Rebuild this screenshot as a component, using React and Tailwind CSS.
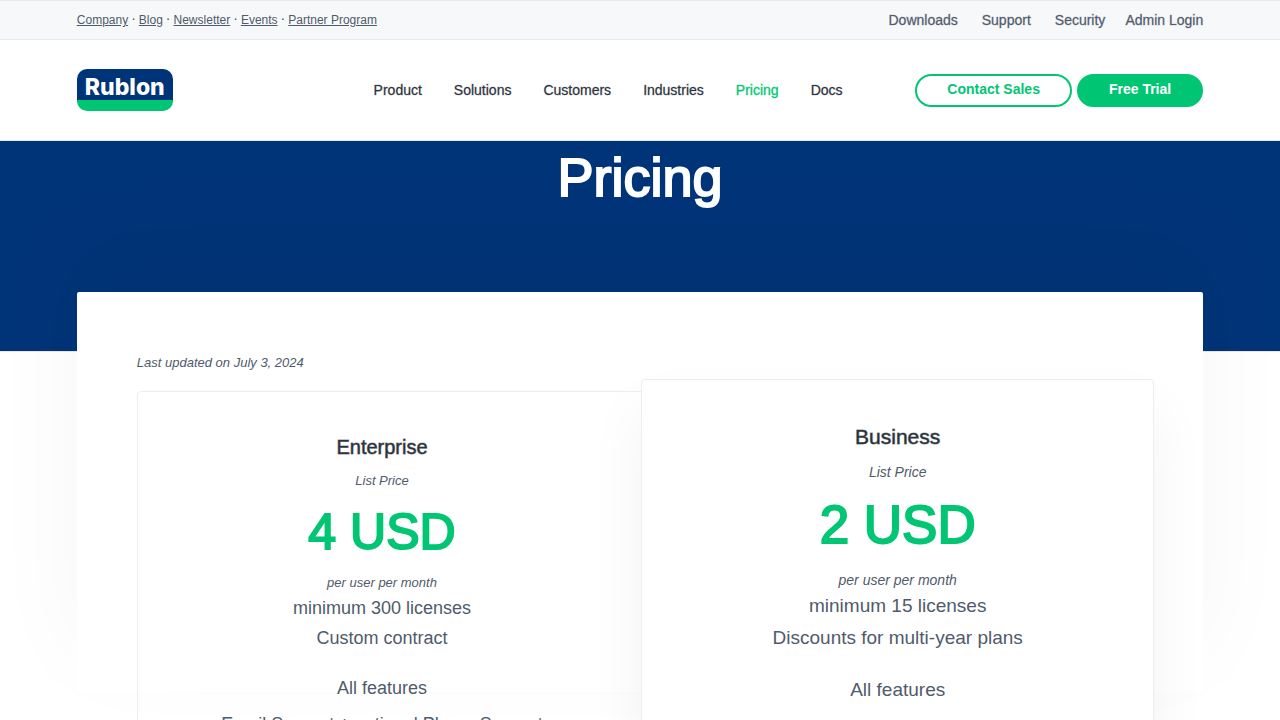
const companyLinks = ['Company', 'Blog', 'Newsletter', 'Events', 'Partner Program'];

const menu = ['Product', 'Solutions', 'Customers', 'Industries', 'Pricing', 'Docs'];

function Logo() {
  return (
    <a
      href="#home"
      className="flex h-[42px] w-24 justify-center overflow-hidden rounded-[10px] border-b-[11px] border-[#00c673] bg-[#003478] font-[Inter] text-[23px] leading-9 font-extrabold text-white"
    >
      Rublon
    </a>
  );
}

function TopBar() {
  return (
    <div className="border-y border-[#e6e8ea] bg-[#f7f8fa] px-[6%] text-[#4f5b6b]">
      <div className="flex h-[38px] items-center justify-between">
        <p className="flex gap-[3px] text-xs">
          {companyLinks.map((label, i) => (
            <span key={label} className="flex gap-[3px]">
              {i > 0 && <span className="text-sm leading-3">·</span>}
              <a href="#company" className="underline">{label}</a>
            </span>
          ))}
        </p>
        <nav className="flex text-sm [-webkit-text-stroke:1px_#4f5b6b44]">
          <a href="#downloads" className="mr-6">Downloads</a>
          <a href="#support" className="mr-6">Support</a>
          <a href="#security" className="mr-5">Security</a>
          <a href="#login">Admin Login</a>
        </nav>
      </div>
    </div>
  );
}

function Header() {
  return (
    <header className="flex h-[101px] items-center justify-between border-b border-[#e6e8ea] px-[6%]">
      <Logo />
      <nav className="ml-32 flex gap-8 text-sm text-[#2b323c]">
        {menu.map((label) => (
          <a
            key={label}
            href="#menu"
            className={
              label === 'Pricing'
                ? 'text-[#00c673] [-webkit-text-stroke:1px_#00c67355]'
                : '[-webkit-text-stroke:1px_#2b323c44]'
            }
          >
            {label}
          </a>
        ))}
      </nav>
      <div className="flex gap-[5px] text-sm font-bold">
        <a href="#sales" className="rounded-full border-2 border-[#00c673] px-[30px] pt-[3px] pb-[6px] text-[#00c673]">
          Contact Sales
        </a>
        <a href="#trial" className="rounded-full border-2 border-[#00c673] bg-[#00c673] px-[30px] pt-[3px] pb-[6px] text-white">
          Free Trial
        </a>
      </div>
    </header>
  );
}

function EnterpriseCard() {
  return (
    <section className="mt-3 -mr-1 h-[420px] flex-1 rounded border border-[#ecedef] pt-10 pr-[18px] text-center">
      <h2 className="text-xl leading-[30px] text-[#2b323c] [-webkit-text-stroke:1px_#2b323c88]">Enterprise</h2>
      <p className="mt-[9px] text-[13px] leading-5 italic">List Price</p>
      <p className="mt-[11px] text-[50px] leading-[60px] text-[#00c673] [-webkit-text-stroke:2px_#00c673]">4 USD</p>
      <p className="mt-[11px] text-[13px] leading-5 italic">per user per month</p>
      <div className="text-lg leading-[30px]">
        <p>minimum 300 licenses</p>
        <p>Custom contract</p>
        <p className="mt-5">All features</p>
        <p className="mt-[6px]">Email Support + optional Phone Support</p>
      </div>
    </section>
  );
}

function BusinessCard() {
  return (
    <section className="z-10 -mr-[11px] h-[460px] w-[513px] shrink-0 rounded border border-[#ecedef] bg-white pt-[41px] text-center shadow-[0_30px_60px_rgba(0,0,0,0.05)]">
      <h2 className="text-[21px] leading-[31px] text-[#2b323c] [-webkit-text-stroke:1px_#2b323c88]">Business</h2>
      <p className="mt-[10px] text-sm leading-5 italic">List Price</p>
      <p className="mt-3 text-[53px] leading-[62px] text-[#00c673] [-webkit-text-stroke:2px_#00c673]">2 USD</p>
      <p className="mt-[14px] text-sm leading-5 italic">per user per month</p>
      <div className="text-[19px] leading-8">
        <p>minimum 15 licenses</p>
        <p>Discounts for multi-year plans</p>
        <p className="mt-5">All features</p>
      </div>
    </section>
  );
}

export default function App() {
  return (
    <div className="h-screen overflow-hidden bg-white font-['Liberation_Sans',sans-serif] text-[#4f5b6b]">
      <TopBar />
      <Header />
      <div className="h-[211px] border-b border-[#e6e8ea] bg-[#003478]">
        <h1 className="pt-[6px] text-center text-[54px] leading-[60px] text-white [-webkit-text-stroke:2px_white]">
          Pricing
        </h1>
      </div>
      <main className="relative mx-[6%] -mt-[60px] h-[400px] rounded-xs bg-white px-[60px] pt-[60px] shadow-[0_-40px_100px_rgba(0,0,0,0.04)]">
        <p className="text-[13px] leading-[22px] italic">Last updated on July 3, 2024</p>
        <div className="mt-[5px] flex items-start">
          <EnterpriseCard />
          <BusinessCard />
        </div>
      </main>
    </div>
  );
}
